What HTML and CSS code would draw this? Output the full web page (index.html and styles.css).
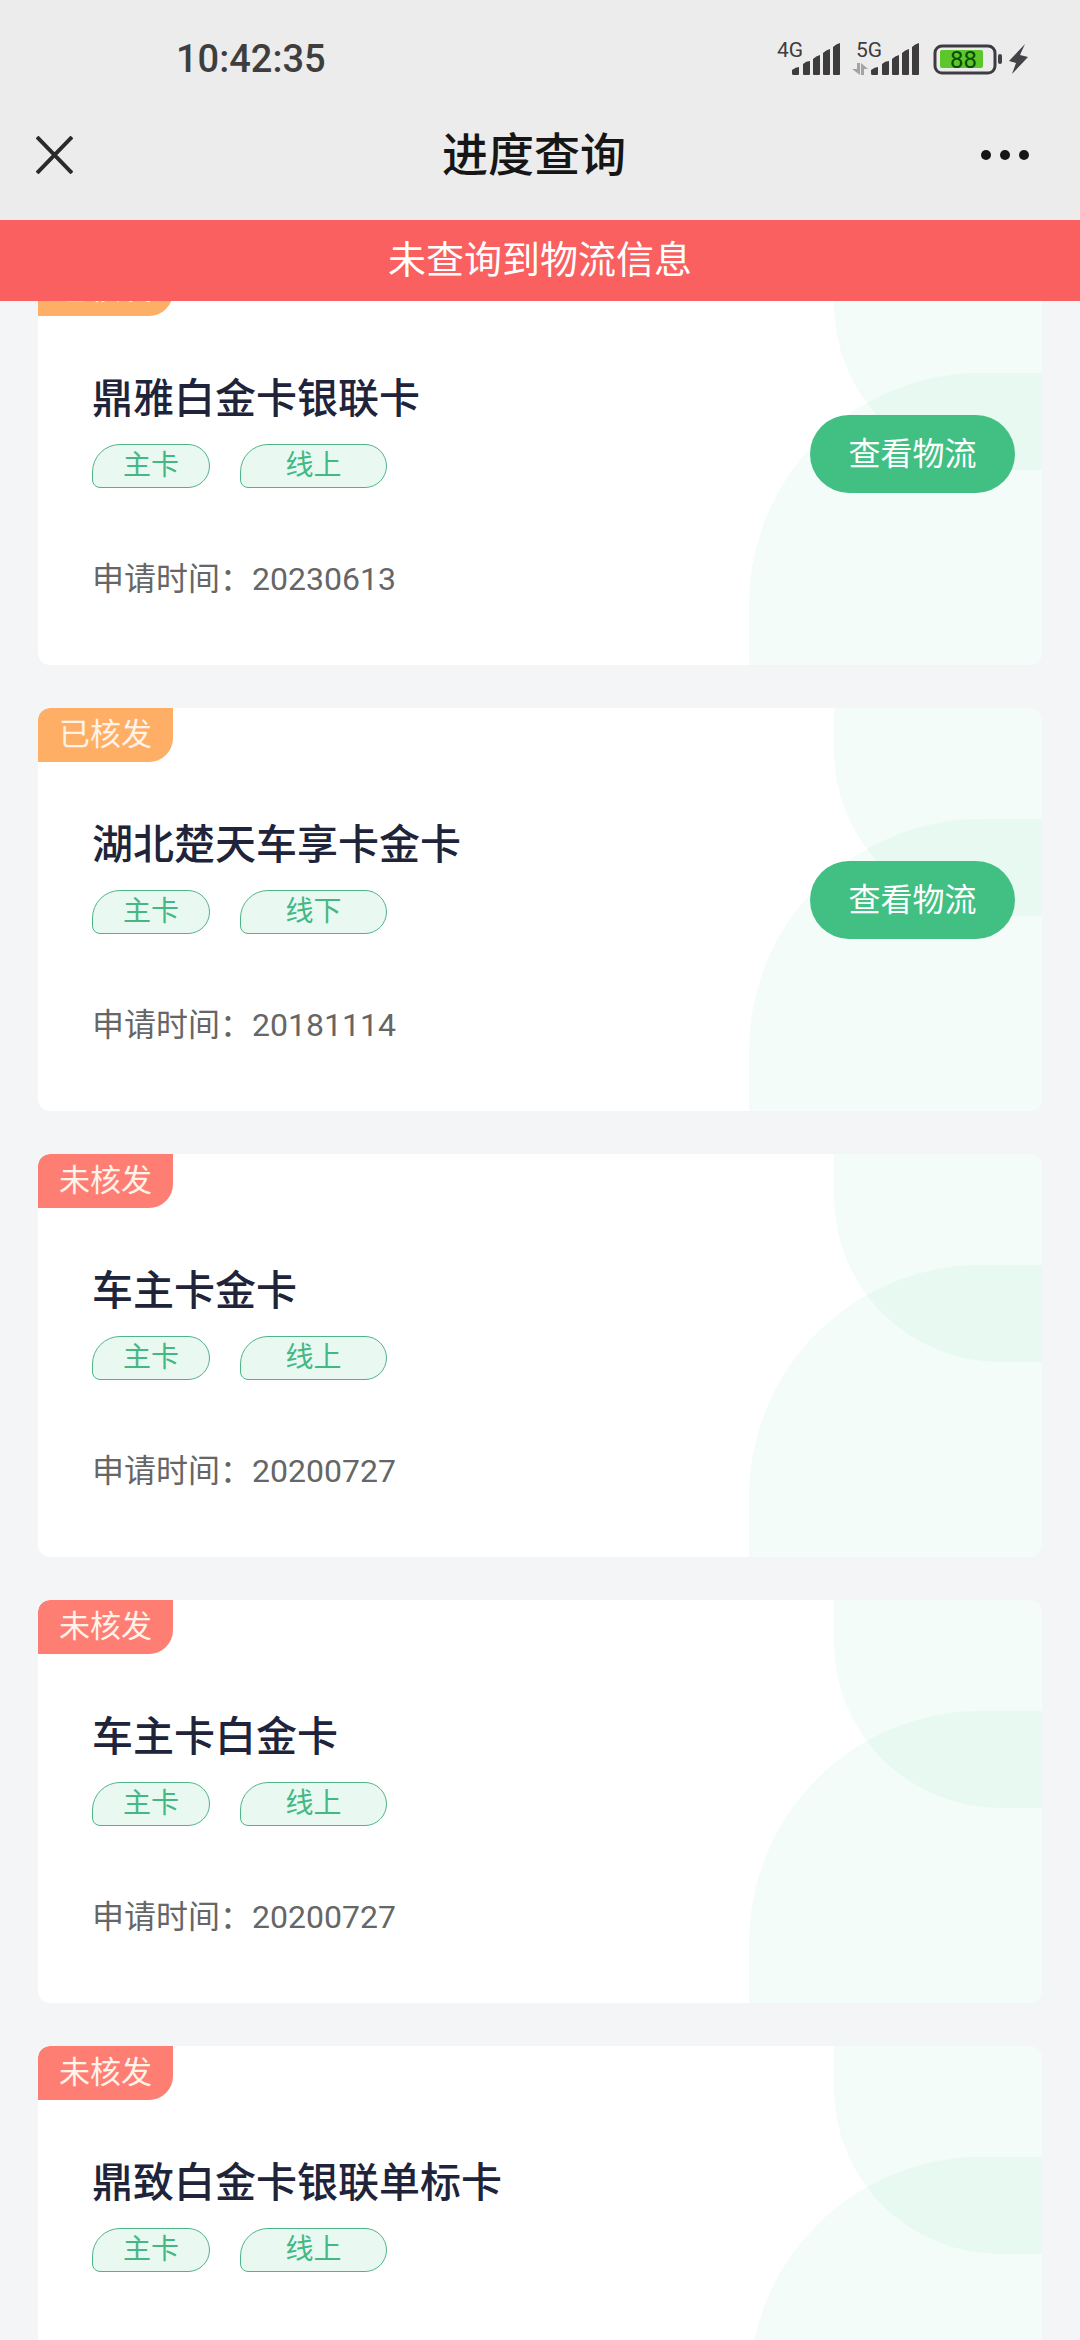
FILE: index.html
```html
<!DOCTYPE html>
<html lang="zh-CN">
<head>
  <meta charset="utf-8">
  <meta name="viewport" content="width=device-width, initial-scale=1">
  <title>进度查询</title>
  <link rel="stylesheet" href="styles.css">
</head>
<body>
  <div class="app">
    <header class="top">
      <div class="status">
        <time class="clock">10:42:35</time>
        <div class="indicators">
          <svg class="signal" width="63" height="40" viewBox="0 -4 63 40" role="img" aria-label="4G">
            <text x="0" y="14">4G</text>
            <path d="M15 30v-3q4-3 7-3v7q0 1-1 1h-5q-1 0-1-2zM26 31V21q3-3 7-3v13q0 1-1 1h-5q-1 0-1-1zM36 31V16q3-3 7-4v19q0 1-1 1h-5q-1 0-1-1zM46 31V10q3-3 7-4v25q0 1-1 1h-5q-1 0-1-1zM56 31V4q3-3 7-4v31q0 1-1 1h-5q-1 0-1-1z"/>
          </svg>
          <svg class="signal" width="67" height="40" viewBox="0 -4 67 40" role="img" aria-label="5G">
            <text x="4" y="14">5G</text>
            <path class="data" d="M5 20h3v12l-8-6h5zM9 32V20l7 6h-4v6z"/>
            <path d="M19 30v-3q4-3 7-3v7q0 1-1 1h-5q-1 0-1-2zM30 31V21q3-3 7-3v13q0 1-1 1h-5q-1 0-1-1zM40 31V16q3-3 7-4v19q0 1-1 1h-5q-1 0-1-1zM50 31V10q3-3 7-4v25q0 1-1 1h-5q-1 0-1-1zM60 31V4q3-3 7-4v31q0 1-1 1h-5q-1 0-1-1z"/>
          </svg>
          <svg class="battery" width="97" height="32" viewBox="0 0 97 32" role="img" aria-label="88">
            <rect class="shell" x="4" y="3" width="60" height="27" rx="7"/>
            <rect class="charge" x="9" y="7" width="43" height="18" rx="2"/>
            <text x="19" y="25">88</text>
            <rect class="solid" x="67" y="11" width="4" height="10" rx="2"/>
            <path class="solid" d="M94 1L78 18l7 2-4 11 16-17-8-2z"/>
          </svg>
        </div>
      </div>
      <nav class="nav">
        <button class="icon-btn close" type="button" aria-label="关闭">
          <svg width="37" height="38" viewBox="0 0 37 38"><path d="M1 1l35 36M36 1L1 37"/></svg>
        </button>
        <h1 class="title">进度查询</h1>
        <button class="icon-btn more" type="button" aria-label="更多">
          <svg width="48" height="10" viewBox="0 0 48 10"><circle cx="5" cy="5" r="5"/><circle cx="24" cy="5" r="5"/><circle cx="43" cy="5" r="5"/></svg>
        </button>
      </nav>
    </header>

    <main class="content">
      <p class="toast" role="alert">未查询到物流信息</p>
      <div class="list">
        <article class="card">
          <div class="details">
            <span class="badge issued">已核发</span>
            <h2 class="name">鼎雅白金卡银联卡</h2>
            <div class="tags"><span class="tag">主卡</span><span class="tag wide">线上</span></div>
            <p class="date">申请时间：20230613</p>
          </div>
          <button class="track" type="button">查看物流</button>
        </article>
        <article class="card">
          <div class="details">
            <span class="badge issued">已核发</span>
            <h2 class="name">湖北楚天车享卡金卡</h2>
            <div class="tags"><span class="tag">主卡</span><span class="tag wide">线下</span></div>
            <p class="date">申请时间：20181114</p>
          </div>
          <button class="track" type="button">查看物流</button>
        </article>
        <article class="card">
          <div class="details">
            <span class="badge rejected">未核发</span>
            <h2 class="name">车主卡金卡</h2>
            <div class="tags"><span class="tag">主卡</span><span class="tag wide">线上</span></div>
            <p class="date">申请时间：20200727</p>
          </div>
        </article>
        <article class="card">
          <div class="details">
            <span class="badge rejected">未核发</span>
            <h2 class="name">车主卡白金卡</h2>
            <div class="tags"><span class="tag">主卡</span><span class="tag wide">线上</span></div>
            <p class="date">申请时间：20200727</p>
          </div>
        </article>
        <article class="card">
          <div class="details">
            <span class="badge rejected">未核发</span>
            <h2 class="name">鼎致白金卡银联单标卡</h2>
            <div class="tags"><span class="tag">主卡</span><span class="tag wide">线上</span></div>
          </div>
        </article>
      </div>
    </main>
  </div>
</body>
</html>
```

FILE: styles.css
```css
* {
  box-sizing: border-box;
}

body,
h1,
h2,
p {
  margin: 0;
}

body {
  font-family: Roboto, "Noto Sans CJK SC", sans-serif;
  background: #f4f5f7;
}

button {
  padding: 0;
  border: 0;
  background: none;
  font-family: inherit;
  cursor: pointer;
}

svg {
  display: block;
}

.app {
  display: flex;
  flex-direction: column;
  height: 100vh;
}

/* System status bar and page navigation */
.top {
  flex: none;
  background: #ececec;
}

.status {
  display: flex;
  align-items: center;
  justify-content: space-between;
  height: 90px;
  padding: 28px 52px 0 176px;
}

.clock {
  font-size: 38px;
  font-weight: 500;
  line-height: 48px;
  color: #3e3e3e;
}

.indicators {
  display: flex;
  align-items: center;
  gap: 12px;
}

.signal {
  fill: #3e3c3d;
  font-size: 21px;
}

.signal .data {
  fill: #a3a3a3;
}

.battery {
  font-size: 24px;
  fill: #0c4a06;
}

.battery .shell {
  fill: none;
  stroke: #3e3c42;
  stroke-width: 3;
}

.battery .charge {
  fill: #5cc62a;
}

.battery .solid {
  fill: #434247;
}

.nav {
  display: flex;
  align-items: center;
  justify-content: space-between;
  height: 130px;
  padding: 0 51px 0 36px;
}

.icon-btn {
  display: flex;
  align-items: center;
  height: 48px;
}

.close {
  width: 51px;
}

.close path {
  fill: none;
  stroke: #2a2a2a;
  stroke-width: 4;
}

.more svg {
  fill: #161616;
}

.title {
  font-size: 46px;
  font-weight: 500;
  line-height: 64px;
  color: #161616;
}

/* Scrolling list with the message bar over its top edge */
.content {
  position: relative;
  flex: 1;
  min-height: 0;
}

.toast {
  position: absolute;
  top: 0;
  left: 0;
  right: 0;
  z-index: 2;
  padding: 12px 0 13px;
  font-size: 38px;
  line-height: 56px;
  text-align: center;
  color: #fff;
  background: #f9605f;
}

.list {
  display: flex;
  flex-direction: column;
  gap: 43px;
  height: 100%;
  padding: 42px 38px;
  overflow-y: auto;
  scrollbar-width: none;
}

.card {
  position: relative;
  display: flex;
  flex: none;
  align-items: flex-start;
  justify-content: space-between;
  min-height: 403px;
  padding-right: 27px;
  border-radius: 12px;
  overflow: hidden;
  background: #fff;
}

/* Two overlapping tinted curves on the right side */
.card::before,
.card::after {
  content: "";
  position: absolute;
  right: 0;
  background: rgba(50, 205, 130, 0.06);
}

.card::before {
  top: 0;
  width: 208px;
  height: 208px;
  border-bottom-left-radius: 166px;
}

.card::after {
  bottom: 0;
  width: 293px;
  height: 292px;
  border-top-left-radius: 232px;
}

.details {
  display: flex;
  flex-direction: column;
  align-items: flex-start;
  padding-bottom: 64px;
}

.badge {
  width: 135px;
  border-radius: 12px 0 24px 0;
  font-size: 31px;
  line-height: 54px;
  text-align: center;
  color: #fff3ea;
}

.issued {
  background: #ffae66;
}

.rejected {
  background: #ff7e74;
}

.name {
  margin: 59px 0 0 54px;
  font-size: 41px;
  font-weight: 500;
  line-height: 48px;
  color: #20243a;
}

.tags {
  display: flex;
  gap: 30px;
  margin: 21px 0 0 54px;
}

.tag {
  width: 118px;
  border: 1px solid #4fb488;
  border-radius: 28px 22px 22px 8px;
  font-size: 28px;
  line-height: 42px;
  text-align: center;
  color: #43b883;
  background: #eaf8f2;
}

.tag.wide {
  width: 147px;
}

.date {
  margin: 69px 0 0 54px;
  font-size: 32px;
  line-height: 44px;
  color: #666;
}

.track {
  position: relative;
  z-index: 1;
  width: 205px;
  height: 78px;
  margin-top: 153px;
  padding-bottom: 6px;
  border-radius: 39px;
  font-size: 32px;
  color: #fff;
  background: #42bf83;
}
```
